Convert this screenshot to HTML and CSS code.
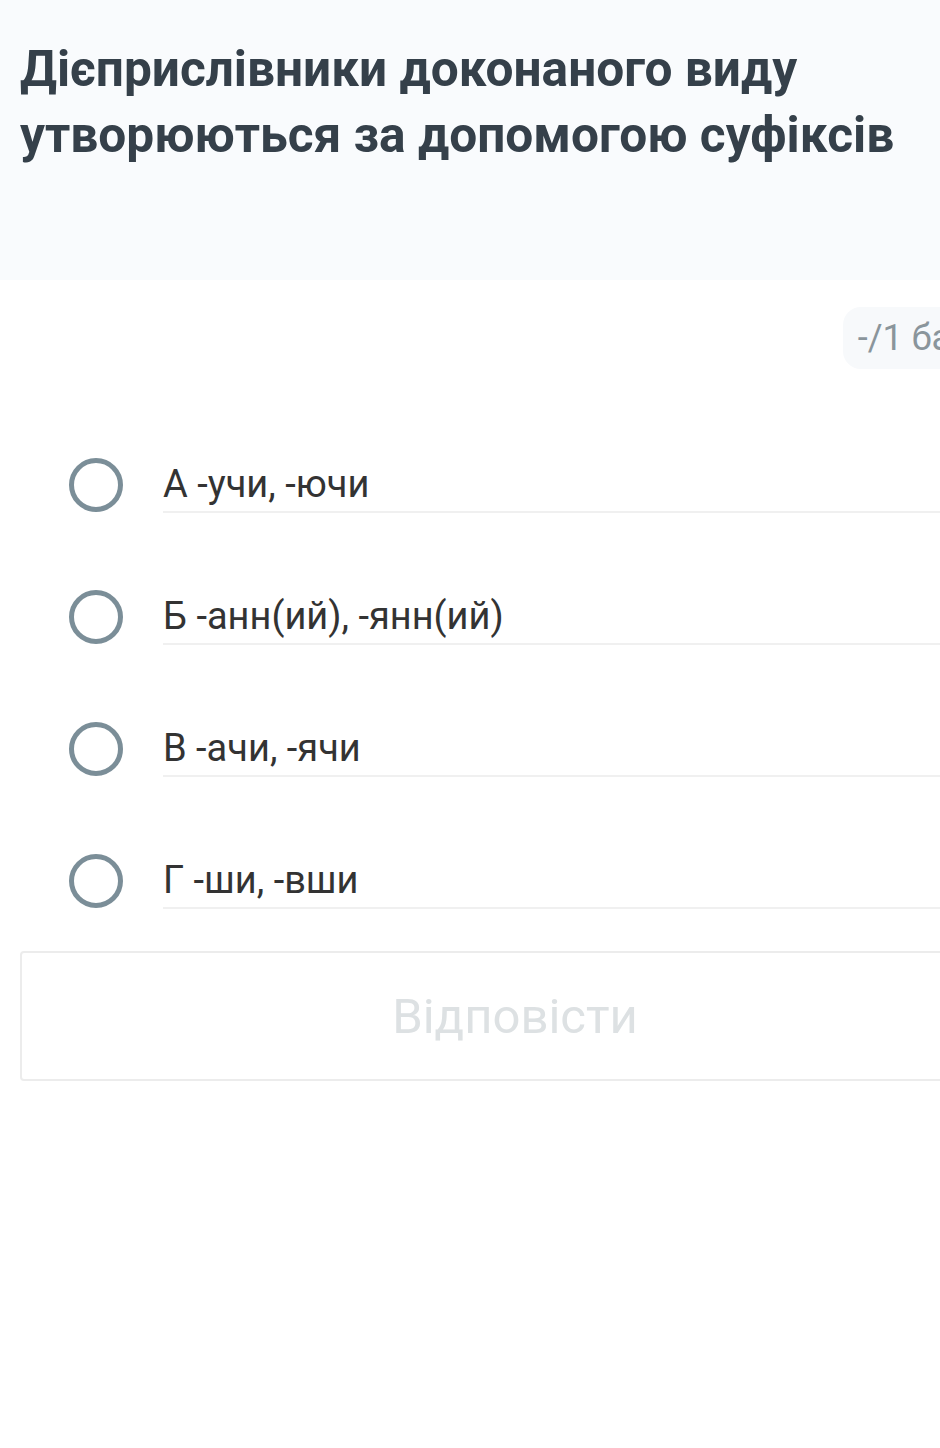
FILE: index.html
```html
<!DOCTYPE html>
<html lang="uk">
<head>
    <meta charset="UTF-8">
    <title>Питання</title>
    <meta name="viewport" content="width=device-width, initial-scale=1.0">
    <link rel="stylesheet" href="styles.css">
</head>
<body>
    <div class="page">
        <div class="question">
            <h1>Дієприслівники доконаного виду утворюються за допомогою суфіксів</h1>
        </div>

        <div class="meta">
            <span class="points">-/1 бал</span>
        </div>

        <ul class="options">
            <li class="option">
                <span class="radio"></span>
                <span class="label">А -учи, -ючи</span>
            </li>
            <li class="option">
                <span class="radio"></span>
                <span class="label">Б -анн(ий), -янн(ий)</span>
            </li>
            <li class="option">
                <span class="radio"></span>
                <span class="label">В -ачи, -ячи</span>
            </li>
            <li class="option">
                <span class="radio"></span>
                <span class="label">Г -ши, -вши</span>
            </li>
        </ul>

        <div class="actions">
            <button class="answer-button" type="button" disabled>Відповісти</button>
        </div>
    </div>
</body>
</html>
```

FILE: styles.css
```css
html, body {
    margin: 0;
    padding: 0;
    overflow: hidden;
}

body {
    font-family: Roboto, 'Noto Sans', sans-serif;
    background-color: #fff;
    color: #333;
}

.page {
    width: 1030px;
}

.question {
    background-color: #f9fbfd;
    height: 280px;
    padding: 36px 20px 0;
    box-sizing: border-box;
}

h1 {
    margin: 0;
    width: 900px;
    font-size: 49.6px;
    line-height: 66px;
    font-weight: 700;
    color: #35404a;
}

.meta {
    display: flex;
    justify-content: flex-end;
    padding: 27px 43px 0 20px;
}

.points {
    background-color: #f7f9fb;
    color: #8a959b;
    font-size: 36px;
    padding: 12px 15px;
    border-radius: 18px;
    line-height: 38px;
}

.options {
    list-style: none;
    margin: 0;
    padding: 87px 0 0;
}

.option {
    display: flex;
    align-items: flex-start;
    height: 132px;
}

.radio {
    flex: none;
    width: 44px;
    height: 44px;
    border: 5px solid #7b8e98;
    border-radius: 50%;
    margin: 2px 40px 0 69px;
}

.label {
    flex: 1;
    font-size: 38px;
    line-height: 50px;
    color: #333;
    padding: 3px 0 2px;
    border-bottom: 2px solid #f0f0f0;
}

.actions {
    padding: 0 20px;
    margin-top: -33px;
}

.answer-button {
    display: block;
    width: 100%;
    height: 130px;
    background-color: #fff;
    border: 2px solid #ececec;
    border-radius: 4px;
    font-family: Roboto, 'Noto Sans', sans-serif;
    font-size: 49px;
    color: #dde1e3;
}
```
